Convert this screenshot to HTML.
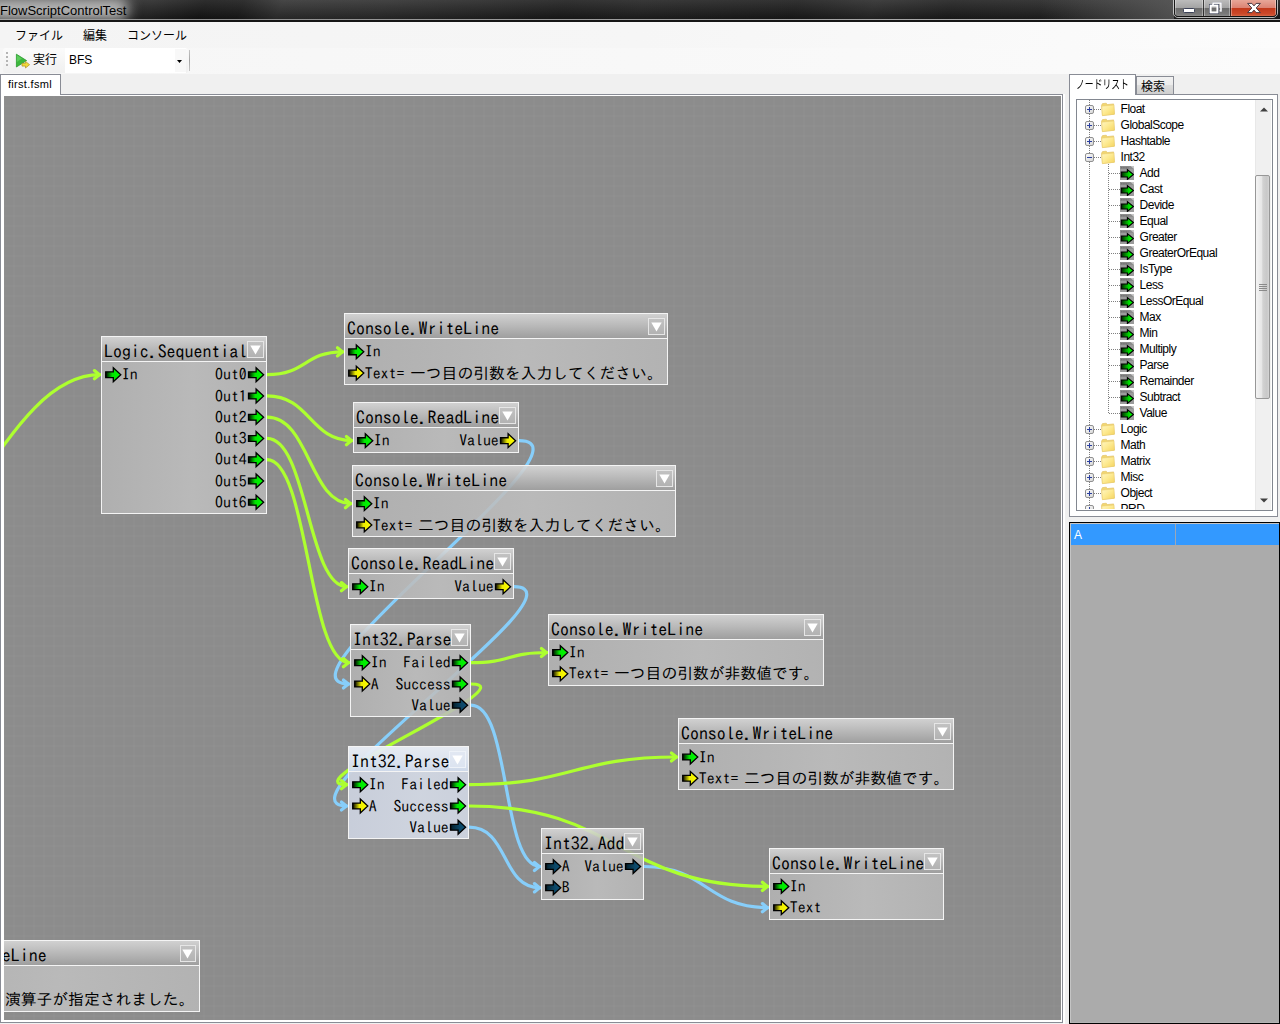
<!DOCTYPE html>
<html lang="ja">
<head>
<meta charset="utf-8">
<title>FlowScriptControlTest</title>
<style>
html,body{margin:0;padding:0;}
body{width:1280px;height:1024px;overflow:hidden;background:#f0f0f0;position:relative;font-family:"Liberation Sans","Noto Sans CJK JP",sans-serif;font-size:12px;color:#000;}
.abs{position:absolute;}
/* title bar */
#titlebar{left:0;top:0;width:1280px;height:20px;background:linear-gradient(115deg,#2c2c2c 0%,#262626 12%,#161616 16%,#1a1a1a 19%,#323232 22%,#2e2e2e 30%,#242424 38%,#1c1c1c 44%,#222 50%,#1b1b1b 62%,#2a2a2a 68%,#1e1e1e 74%,#262626 86%,#1c1c1c 100%);overflow:hidden;}
#titlebar .shade{left:0;top:0;width:1280px;height:20px;background:linear-gradient(180deg,rgba(255,255,255,.10),rgba(0,0,0,.25));}
#titleglow{left:-14px;top:-2px;width:142px;height:22px;background:#bababa;filter:blur(7px);border-radius:8px;}
#titletext{left:0;top:2.7px;font-size:13px;line-height:16px;color:#000;white-space:nowrap;}
#tbline1{left:0;top:19px;width:1280px;height:1px;background:linear-gradient(90deg,#a8a8a8,#8e8e8e 15%,#a0a0a0 60%,#b8b8b8 100%);}
#tbline2{left:0;top:20px;width:1280px;height:2px;background:#161616;}
.wb{top:0;height:20px;box-sizing:border-box;background:linear-gradient(180deg,#c2c2c2 0%,#a4a4a4 48%,#6c6c6c 52%,#7a7a7a 80%,#9a9a9a 100%);box-shadow:inset 0 0 0 1px rgba(255,255,255,.35);}
.wb.wc{background:linear-gradient(180deg,#eab0a2 0%,#dc8474 48%,#c23a1c 52%,#cc4a2a 80%,#de8060 100%);}
/* menu */
#menubar{left:0;top:22px;width:1280px;height:26px;background:linear-gradient(90deg,#f4f4f4,#f6f6f6 50%,#fcfcfc 100%);}
.mi{position:absolute;top:5.7px;font-size:12px;line-height:16px;white-space:nowrap;}
#toolbarbg{left:0;top:48px;width:1280px;height:26px;background:linear-gradient(90deg,#f6f6f6,#f8f8f8 50%,#fbfbfb 100%);}
#toolbar{left:3px;top:48px;width:185px;height:25px;background:linear-gradient(#fbfbfb,#f0f0f0);border-radius:3px;}
/* tab controls */
.tabpage{position:absolute;border:1px solid #898c95;background:#fff;box-sizing:border-box;}
.tab{position:absolute;box-sizing:border-box;border:1px solid #898c95;border-bottom:none;font-size:11px;white-space:nowrap;}
/* canvas */
#canvas{left:4px;top:96px;width:1057px;height:924px;overflow:hidden;background-color:#8c8c8c;
background-image:linear-gradient(90deg,rgba(255,255,255,.021) 0,rgba(255,255,255,.021) 1px,transparent 1px,transparent 9px,rgba(255,255,255,.021) 9px),linear-gradient(0deg,rgba(255,255,255,.021) 0,rgba(255,255,255,.021) 1px,transparent 1px,transparent 9px,rgba(255,255,255,.021) 9px);
background-size:10px 10px;background-position:0 0;}
.links{position:absolute;left:0;top:0;}
.links path{fill:none;stroke-width:3.2;stroke-linecap:round;stroke-linejoin:miter;}
.node{position:absolute;box-sizing:border-box;border:1px solid #f4f4f4;font-family:"IPAGothic","Liberation Mono",monospace;color:#000;overflow:hidden;}
.node .hd{position:relative;height:24px;background:linear-gradient(180deg,rgba(218,218,218,.88) 0%,rgba(193,193,193,.88) 45%,rgba(161,161,161,.88) 100%);border-bottom:1px solid #f4f4f4;}
.node .tt{position:absolute;left:2px;top:4px;font-size:17.9px;line-height:20px;white-space:nowrap;}
.node .dd{position:absolute;right:2.3px;top:4.4px;width:16.4px;height:17px;box-sizing:border-box;border:1.5px solid #e6e6e6;background:rgba(190,190,190,.5);}
.node .dd svg{position:absolute;left:1.3px;top:2.6px;}
.node .bd{position:absolute;left:0;right:0;top:25px;bottom:0;background:linear-gradient(90deg,rgba(180,180,180,.87) 0%,rgba(192,192,192,.87) 55%,rgba(184,184,184,.87) 100%);}
.node.sel .hd{background:linear-gradient(180deg,rgba(234,239,247,.95) 0%,rgba(226,233,244,.95) 50%,rgba(210,221,238,.95) 100%);}
.node.sel .bd{background:linear-gradient(90deg,rgba(203,209,222,.95),rgba(210,216,227,.95) 60%,rgba(206,212,224,.95));}
.node.sel .dd{background:rgba(225,232,243,.6);border-color:#eef2f8;}
.pas{position:absolute;left:0;top:0;overflow:hidden;}
.pas path{stroke:#000;stroke-width:1.3;stroke-linejoin:miter;}
.pl,.pr{position:absolute;font-size:15.8px;line-height:19px;white-space:nowrap;}
.jp{margin-left:-2.2px;}
/* tree */
#tree{left:1076px;top:99px;width:197px;height:412px;border:1px solid #828790;background:#fff;box-sizing:border-box;overflow:hidden;}
.tr{position:absolute;height:16px;font-size:12px;line-height:16px;white-space:nowrap;letter-spacing:-.52px;margin-left:-.4px;}
.dv{position:absolute;width:1px;background-image:linear-gradient(180deg,#808080 1px,transparent 1px);background-size:1px 2px;}
.dh{position:absolute;height:1px;background-image:linear-gradient(90deg,#808080 1px,transparent 1px);background-size:2px 1px;}
#tree .abs{position:absolute;}
#sb{position:absolute;left:178px;top:0;width:16px;height:410px;background:#f0f0f0;border-left:1px solid #e8e8e8;box-sizing:border-box;}
#thumb{position:absolute;left:-1px;top:74.5px;width:15px;height:224px;box-sizing:border-box;border:1px solid #979797;border-radius:2px;background:linear-gradient(90deg,#f4f4f4 0%,#e6e6e6 45%,#d2d2d2 52%,#c8c8c8 85%,#d6d6d6 100%);}
/* grid */
#grid{left:1069px;top:522px;width:211px;height:502px;background:#ababab;border:1px solid #000;box-sizing:border-box;}
</style>
</head>
<body>
<svg width="0" height="0" style="position:absolute">
<defs>
<linearGradient id="gg" x1="0" y1="0" x2="1" y2="0"><stop offset="0" stop-color="#000"/><stop offset=".08" stop-color="#002c00"/><stop offset=".44" stop-color="#00e400"/><stop offset="1" stop-color="#00ff00"/></linearGradient>
<linearGradient id="gy" x1="0" y1="0" x2="1" y2="0"><stop offset="0" stop-color="#000"/><stop offset=".08" stop-color="#2c2c00"/><stop offset=".44" stop-color="#ecec00"/><stop offset="1" stop-color="#ffff00"/></linearGradient>
<linearGradient id="gn" x1="0" y1="0" x2="1" y2="0"><stop offset="0" stop-color="#020c12"/><stop offset=".15" stop-color="#052838"/><stop offset=".62" stop-color="#0c4868"/><stop offset="1" stop-color="#0e5074"/></linearGradient>
<linearGradient id="exg" x1="0" y1="0" x2="1" y2="1"><stop offset="0" stop-color="#fff"/><stop offset="1" stop-color="#d4d4d4"/></linearGradient>
<linearGradient id="fog" x1="0" y1="0" x2="1" y2="1"><stop offset="0" stop-color="#fff6c4"/><stop offset=".5" stop-color="#fde98e"/><stop offset="1" stop-color="#f4d35e"/></linearGradient>
<linearGradient id="lfg" x1="0" y1="0" x2="1" y2="0"><stop offset="0" stop-color="#002000"/><stop offset=".65" stop-color="#00e000"/><stop offset="1" stop-color="#00ff00"/></linearGradient>


</defs>
</svg>

<!-- TITLE BAR -->
<div id="titlebar" class="abs"><div class="abs shade"></div><div id="titleglow" class="abs"></div><div class="abs" style="left:1040px;top:0;width:134px;height:20px;background:linear-gradient(90deg,rgba(90,90,90,0),rgba(96,96,96,.75))"></div><div id="titletext" class="abs">FlowScriptControlTest</div>
<div class="abs" style="left:1173px;top:-3px;width:105px;height:21px;border:1px solid rgba(235,235,235,.75);border-radius:0 0 5px 5px;box-sizing:border-box;"></div>
<div class="abs" style="left:1174px;top:-3px;width:103px;height:20px;border:1px solid rgba(20,20,20,.85);border-radius:0 0 4px 4px;box-sizing:border-box;overflow:hidden;">
<div class="abs wb" style="left:0;width:28px;"></div>
<div class="abs wb" style="left:28px;width:27px;border-left:1px solid rgba(30,30,30,.8);"></div>
<div class="abs wb wc" style="left:55px;width:46px;border-left:1px solid rgba(30,30,30,.8);"></div>
</div>
<svg class="abs" style="left:1174px;top:0" width="104" height="18" viewBox="0 0 104 18">
<rect x="9.5" y="8.5" width="11" height="4" rx=".8" fill="#fff" stroke="#3c4258" stroke-width="1"/>
<g fill="none" stroke="#3c4258" stroke-width="1"><path d="M38.5 5V2.5H47.5V11.5H45"/><rect x="35.5" y="4.5" width="9" height="9" /></g>
<path d="M39 5V3H47V11H45.5" fill="none" stroke="#fff" stroke-width="1.6"/>
<rect x="36.6" y="5.6" width="6.8" height="6.8" fill="none" stroke="#fff" stroke-width="2"/>
<path d="M73.6 3.4H77.9L80 5.9L82.1 3.4H86.4L82.2 8L86.4 12.6H82.1L80 10.1L77.9 12.6H73.6L77.8 8Z" fill="#fff" stroke="#4a3a44" stroke-width="1" stroke-linejoin="round"/>
</svg>
</div>
<div id="tbline1" class="abs"></div>
<div id="tbline2" class="abs"></div>

<!-- MENU -->
<div id="menubar" class="abs">
<span class="mi" style="left:15px">ファイル</span>
<span class="mi" style="left:83px">編集</span>
<span class="mi" style="left:127px">コンソール</span>
</div>
<div id="toolbarbg" class="abs"></div>
<div id="toolbar" class="abs">
<div class="abs" style="left:62px;top:0;width:121px;height:25px;background:#fff"></div>
<div class="abs" style="left:172px;top:1px;width:11px;height:23px;background:#f8f8f8"></div>
<div class="abs" style="left:3px;top:4px;width:2px;height:15px;background-image:linear-gradient(180deg,#b4b4b4 2px,transparent 2px);background-size:2px 4px"></div>
<svg class="abs" style="left:11px;top:5px" width="18" height="16" viewBox="0 0 18 16"><path d="M2.4 1.2L12.6 7.6L2.4 14Z" fill="#3cb83c" stroke="#2a9a2e" stroke-width=".8" stroke-linejoin="round"/><path d="M2.8 2.2L8 5.4L2.8 9Z" fill="#6fd86f" opacity=".6"/><path d="M8 10.3H11.5V8.4L15.6 11.7L11.5 15V13.1H8Z" fill="#f2d93a" stroke="#b09220" stroke-width=".7"/></svg>
<span class="abs" style="left:30px;top:4px;font-size:12px;line-height:16px;white-space:nowrap">実行</span>
<span class="abs" style="left:66px;top:4px;font-size:12px;line-height:16px;white-space:nowrap">BFS</span>
<svg class="abs" style="left:174px;top:11.5px" width="5" height="3" viewBox="0 0 5 3"><path d="M0 0H5L2.5 3Z" fill="#000"/></svg>
<div class="abs" style="left:186px;top:2px;width:1px;height:21px;background:linear-gradient(#c4c4c4,#a4a4a4 50%,#c4c4c4)"></div>
</div>

<!-- LEFT TAB CONTROL -->
<div class="tabpage" style="left:0;top:94px;width:1063px;height:929px;"></div>
<div class="tab" style="left:0;top:74px;width:61px;height:21px;background:#fff;"><span style="position:absolute;left:7px;top:3px;line-height:13px;letter-spacing:.3px">first.fsml</span></div>
<div class="abs" style="left:1063px;top:94px;width:2px;height:930px;background:#fff"></div>

<div id="canvas" class="abs">
<svg class="links" width="1058" height="923" viewBox="4 96 1058 923"><path d="M519.0 440.6C605.0 440.6 264.0 684.0 349.0 684.0" stroke="#87cefa"/><path d="M343.4 679.9L348.4 684.0L343.4 688.1" stroke="#87cefa"/><path d="M514.0 586.7C594.0 586.7 268.0 806.0 347.0 806.0" stroke="#87cefa"/><path d="M341.4 801.9L346.4 806.0L341.4 810.1" stroke="#87cefa"/><path d="M471.0 705.2C511.0 705.2 501.0 866.5 540.0 866.5" stroke="#87cefa"/><path d="M534.4 862.4L539.4 866.5L534.4 870.6" stroke="#87cefa"/><path d="M469.0 827.2C509.0 827.2 501.0 887.8 540.0 887.8" stroke="#87cefa"/><path d="M534.4 883.6L539.4 887.8L534.4 891.9" stroke="#87cefa"/><path d="M644.0 866.5C706.5 866.5 706.5 907.7 768.0 907.7" stroke="#87cefa"/><path d="M762.4 903.6L767.4 907.7L762.4 911.8" stroke="#87cefa"/><path d="M-200.0 625.0C-50.0 625.0 -7.0 374.7 100.0 374.7" stroke="#adff2f"/><path d="M94.4 370.6L99.4 374.7L94.4 378.8" stroke="#adff2f"/><path d="M267.0 374.7C307.0 374.7 304.0 351.8 343.0 351.8" stroke="#adff2f"/><path d="M337.4 347.7L342.4 351.8L337.4 355.9" stroke="#adff2f"/><path d="M267.0 395.9C310.0 395.9 310.0 440.6 352.0 440.6" stroke="#adff2f"/><path d="M346.4 436.5L351.4 440.6L346.4 444.7" stroke="#adff2f"/><path d="M267.0 417.2C309.5 417.2 309.5 503.6 351.0 503.6" stroke="#adff2f"/><path d="M345.4 499.5L350.4 503.6L345.4 507.7" stroke="#adff2f"/><path d="M267.0 438.4C307.5 438.4 307.5 586.7 347.0 586.7" stroke="#adff2f"/><path d="M341.4 582.6L346.4 586.7L341.4 590.8" stroke="#adff2f"/><path d="M267.0 459.7C308.5 459.7 308.5 662.7 349.0 662.7" stroke="#adff2f"/><path d="M343.4 658.6L348.4 662.7L343.4 666.8" stroke="#adff2f"/><path d="M471.0 662.7C511.0 662.7 508.0 652.5 547.0 652.5" stroke="#adff2f"/><path d="M541.4 648.4L546.4 652.5L541.4 656.6" stroke="#adff2f"/><path d="M471.0 684.0C531.0 684.0 288.0 784.7 347.0 784.7" stroke="#adff2f"/><path d="M341.4 780.6L346.4 784.7L341.4 788.8" stroke="#adff2f"/><path d="M469.0 784.7C573.5 784.7 573.5 757.0 677.0 757.0" stroke="#adff2f"/><path d="M671.4 752.9L676.4 757.0L671.4 761.1" stroke="#adff2f"/><path d="M469.0 806.0C619.0 806.0 619.0 886.4 768.0 886.4" stroke="#adff2f"/><path d="M762.4 882.3L767.4 886.4L762.4 890.5" stroke="#adff2f"/></svg>
<div class="node" style="left:97.00px;top:240.00px;width:166.00px;height:178.00px"><div class="hd"><span class="tt">Logic.Sequential</span><span class="dd"><svg width="11" height="10" viewBox="0 0 11 10"><path d="M0.3 0.4H10.7L5.5 9.6Z" fill="#fff"/></svg></span></div><div class="bd"><span class="pl" style="left:19.8px;top:3.35px">In</span><span class="pr" style="right:19.3px;top:3.35px">Out0</span><span class="pr" style="right:19.3px;top:24.60px">Out1</span><span class="pr" style="right:19.3px;top:45.85px">Out2</span><span class="pr" style="right:19.3px;top:67.10px">Out3</span><span class="pr" style="right:19.3px;top:88.35px">Out4</span><span class="pr" style="right:19.3px;top:109.60px">Out5</span><span class="pr" style="right:19.3px;top:130.85px">Out6</span><svg class="pas" width="166" height="151" viewBox="0 0 166 151"><path transform="translate(3.00 4.75)" d="M0.7 5.1H8.3V1.1L15.8 8L8.3 14.9V10.9H0.7Z" fill="url(#gg)"/><path transform="translate(145.80 4.75)" d="M0.7 5.1H8.3V1.1L15.8 8L8.3 14.9V10.9H0.7Z" fill="url(#gg)"/><path transform="translate(145.80 26.00)" d="M0.7 5.1H8.3V1.1L15.8 8L8.3 14.9V10.9H0.7Z" fill="url(#gg)"/><path transform="translate(145.80 47.25)" d="M0.7 5.1H8.3V1.1L15.8 8L8.3 14.9V10.9H0.7Z" fill="url(#gg)"/><path transform="translate(145.80 68.50)" d="M0.7 5.1H8.3V1.1L15.8 8L8.3 14.9V10.9H0.7Z" fill="url(#gg)"/><path transform="translate(145.80 89.75)" d="M0.7 5.1H8.3V1.1L15.8 8L8.3 14.9V10.9H0.7Z" fill="url(#gg)"/><path transform="translate(145.80 111.00)" d="M0.7 5.1H8.3V1.1L15.8 8L8.3 14.9V10.9H0.7Z" fill="url(#gg)"/><path transform="translate(145.80 132.25)" d="M0.7 5.1H8.3V1.1L15.8 8L8.3 14.9V10.9H0.7Z" fill="url(#gg)"/></svg></div></div>
<div class="node" style="left:340.00px;top:217.00px;width:324.00px;height:72.00px"><div class="hd"><span class="tt">Console.WriteLine</span><span class="dd"><svg width="11" height="10" viewBox="0 0 11 10"><path d="M0.3 0.4H10.7L5.5 9.6Z" fill="#fff"/></svg></span></div><div class="bd"><span class="pl" style="left:19.8px;top:3.45px">In</span><span class="pl" style="left:19.8px;top:24.70px">Text= <span class="jp">一つ目の引数を入力してください。</span></span><svg class="pas" width="324" height="45" viewBox="0 0 324 45"><path transform="translate(3.00 4.85)" d="M0.7 5.1H8.3V1.1L15.8 8L8.3 14.9V10.9H0.7Z" fill="url(#gg)"/><path transform="translate(3.00 26.10)" d="M0.7 5.1H8.3V1.1L15.8 8L8.3 14.9V10.9H0.7Z" fill="url(#gy)"/></svg></div></div>
<div class="node" style="left:349.00px;top:306.00px;width:166.00px;height:51.00px"><div class="hd"><span class="tt">Console.ReadLine</span><span class="dd"><svg width="11" height="10" viewBox="0 0 11 10"><path d="M0.3 0.4H10.7L5.5 9.6Z" fill="#fff"/></svg></span></div><div class="bd"><span class="pl" style="left:19.8px;top:3.25px">In</span><span class="pr" style="right:19.3px;top:3.25px">Value</span><svg class="pas" width="166" height="24" viewBox="0 0 166 24"><path transform="translate(3.00 4.65)" d="M0.7 5.1H8.3V1.1L15.8 8L8.3 14.9V10.9H0.7Z" fill="url(#gg)"/><path transform="translate(145.80 4.65)" d="M0.7 5.1H8.3V1.1L15.8 8L8.3 14.9V10.9H0.7Z" fill="url(#gy)"/></svg></div></div>
<div class="node" style="left:348.00px;top:369.00px;width:324.00px;height:72.00px"><div class="hd"><span class="tt">Console.WriteLine</span><span class="dd"><svg width="11" height="10" viewBox="0 0 11 10"><path d="M0.3 0.4H10.7L5.5 9.6Z" fill="#fff"/></svg></span></div><div class="bd"><span class="pl" style="left:19.8px;top:3.25px">In</span><span class="pl" style="left:19.8px;top:24.50px">Text= <span class="jp">二つ目の引数を入力してください。</span></span><svg class="pas" width="324" height="45" viewBox="0 0 324 45"><path transform="translate(3.00 4.65)" d="M0.7 5.1H8.3V1.1L15.8 8L8.3 14.9V10.9H0.7Z" fill="url(#gg)"/><path transform="translate(3.00 25.90)" d="M0.7 5.1H8.3V1.1L15.8 8L8.3 14.9V10.9H0.7Z" fill="url(#gy)"/></svg></div></div>
<div class="node" style="left:344.00px;top:452.00px;width:166.00px;height:51.00px"><div class="hd"><span class="tt">Console.ReadLine</span><span class="dd"><svg width="11" height="10" viewBox="0 0 11 10"><path d="M0.3 0.4H10.7L5.5 9.6Z" fill="#fff"/></svg></span></div><div class="bd"><span class="pl" style="left:19.8px;top:3.35px">In</span><span class="pr" style="right:19.3px;top:3.35px">Value</span><svg class="pas" width="166" height="24" viewBox="0 0 166 24"><path transform="translate(3.00 4.75)" d="M0.7 5.1H8.3V1.1L15.8 8L8.3 14.9V10.9H0.7Z" fill="url(#gg)"/><path transform="translate(145.80 4.75)" d="M0.7 5.1H8.3V1.1L15.8 8L8.3 14.9V10.9H0.7Z" fill="url(#gy)"/></svg></div></div>
<div class="node" style="left:346.00px;top:528.00px;width:121.00px;height:93.00px"><div class="hd"><span class="tt">Int32.Parse</span><span class="dd"><svg width="11" height="10" viewBox="0 0 11 10"><path d="M0.3 0.4H10.7L5.5 9.6Z" fill="#fff"/></svg></span></div><div class="bd"><span class="pl" style="left:19.8px;top:3.35px">In</span><span class="pl" style="left:19.8px;top:24.60px">A</span><span class="pr" style="right:19.3px;top:3.35px">Failed</span><span class="pr" style="right:19.3px;top:24.60px">Success</span><span class="pr" style="right:19.3px;top:45.85px">Value</span><svg class="pas" width="121" height="66" viewBox="0 0 121 66"><path transform="translate(3.00 4.75)" d="M0.7 5.1H8.3V1.1L15.8 8L8.3 14.9V10.9H0.7Z" fill="url(#gg)"/><path transform="translate(3.00 26.00)" d="M0.7 5.1H8.3V1.1L15.8 8L8.3 14.9V10.9H0.7Z" fill="url(#gy)"/><path transform="translate(100.80 4.75)" d="M0.7 5.1H8.3V1.1L15.8 8L8.3 14.9V10.9H0.7Z" fill="url(#gg)"/><path transform="translate(100.80 26.00)" d="M0.7 5.1H8.3V1.1L15.8 8L8.3 14.9V10.9H0.7Z" fill="url(#gg)"/><path transform="translate(100.80 47.25)" d="M0.7 5.1H8.3V1.1L15.8 8L8.3 14.9V10.9H0.7Z" fill="url(#gn)"/></svg></div></div>
<div class="node" style="left:544.00px;top:518.00px;width:276.00px;height:72.00px"><div class="hd"><span class="tt">Console.WriteLine</span><span class="dd"><svg width="11" height="10" viewBox="0 0 11 10"><path d="M0.3 0.4H10.7L5.5 9.6Z" fill="#fff"/></svg></span></div><div class="bd"><span class="pl" style="left:19.8px;top:3.15px">In</span><span class="pl" style="left:19.8px;top:24.40px">Text= <span class="jp">一つ目の引数が非数値です。</span></span><svg class="pas" width="276" height="45" viewBox="0 0 276 45"><path transform="translate(3.00 4.55)" d="M0.7 5.1H8.3V1.1L15.8 8L8.3 14.9V10.9H0.7Z" fill="url(#gg)"/><path transform="translate(3.00 25.80)" d="M0.7 5.1H8.3V1.1L15.8 8L8.3 14.9V10.9H0.7Z" fill="url(#gy)"/></svg></div></div>
<div class="node sel" style="left:344.00px;top:650.00px;width:121.00px;height:93.00px"><div class="hd"><span class="tt">Int32.Parse</span><span class="dd"><svg width="11" height="10" viewBox="0 0 11 10"><path d="M0.3 0.4H10.7L5.5 9.6Z" fill="#fff"/></svg></span></div><div class="bd"><span class="pl" style="left:19.8px;top:3.35px">In</span><span class="pl" style="left:19.8px;top:24.60px">A</span><span class="pr" style="right:19.3px;top:3.35px">Failed</span><span class="pr" style="right:19.3px;top:24.60px">Success</span><span class="pr" style="right:19.3px;top:45.85px">Value</span><svg class="pas" width="121" height="66" viewBox="0 0 121 66"><path transform="translate(3.00 4.75)" d="M0.7 5.1H8.3V1.1L15.8 8L8.3 14.9V10.9H0.7Z" fill="url(#gg)"/><path transform="translate(3.00 26.00)" d="M0.7 5.1H8.3V1.1L15.8 8L8.3 14.9V10.9H0.7Z" fill="url(#gy)"/><path transform="translate(100.80 4.75)" d="M0.7 5.1H8.3V1.1L15.8 8L8.3 14.9V10.9H0.7Z" fill="url(#gg)"/><path transform="translate(100.80 26.00)" d="M0.7 5.1H8.3V1.1L15.8 8L8.3 14.9V10.9H0.7Z" fill="url(#gg)"/><path transform="translate(100.80 47.25)" d="M0.7 5.1H8.3V1.1L15.8 8L8.3 14.9V10.9H0.7Z" fill="url(#gn)"/></svg></div></div>
<div class="node" style="left:674.00px;top:622.00px;width:276.00px;height:72.00px"><div class="hd"><span class="tt">Console.WriteLine</span><span class="dd"><svg width="11" height="10" viewBox="0 0 11 10"><path d="M0.3 0.4H10.7L5.5 9.6Z" fill="#fff"/></svg></span></div><div class="bd"><span class="pl" style="left:19.8px;top:3.65px">In</span><span class="pl" style="left:19.8px;top:24.90px">Text= <span class="jp">二つ目の引数が非数値です。</span></span><svg class="pas" width="276" height="45" viewBox="0 0 276 45"><path transform="translate(3.00 5.05)" d="M0.7 5.1H8.3V1.1L15.8 8L8.3 14.9V10.9H0.7Z" fill="url(#gg)"/><path transform="translate(3.00 26.30)" d="M0.7 5.1H8.3V1.1L15.8 8L8.3 14.9V10.9H0.7Z" fill="url(#gy)"/></svg></div></div>
<div class="node" style="left:537.00px;top:732.00px;width:103.00px;height:72.00px"><div class="hd"><span class="tt">Int32.Add</span><span class="dd"><svg width="11" height="10" viewBox="0 0 11 10"><path d="M0.3 0.4H10.7L5.5 9.6Z" fill="#fff"/></svg></span></div><div class="bd"><span class="pl" style="left:19.8px;top:3.15px">A</span><span class="pl" style="left:19.8px;top:24.40px">B</span><span class="pr" style="right:19.3px;top:3.15px">Value</span><svg class="pas" width="103" height="45" viewBox="0 0 103 45"><path transform="translate(3.00 4.55)" d="M0.7 5.1H8.3V1.1L15.8 8L8.3 14.9V10.9H0.7Z" fill="url(#gn)"/><path transform="translate(3.00 25.80)" d="M0.7 5.1H8.3V1.1L15.8 8L8.3 14.9V10.9H0.7Z" fill="url(#gn)"/><path transform="translate(82.80 4.55)" d="M0.7 5.1H8.3V1.1L15.8 8L8.3 14.9V10.9H0.7Z" fill="url(#gn)"/></svg></div></div>
<div class="node" style="left:765.00px;top:752.00px;width:175.00px;height:72.00px"><div class="hd"><span class="tt">Console.WriteLine</span><span class="dd"><svg width="11" height="10" viewBox="0 0 11 10"><path d="M0.3 0.4H10.7L5.5 9.6Z" fill="#fff"/></svg></span></div><div class="bd"><span class="pl" style="left:19.8px;top:3.05px">In</span><span class="pl" style="left:19.8px;top:24.30px">Text</span><svg class="pas" width="175" height="45" viewBox="0 0 175 45"><path transform="translate(3.00 4.45)" d="M0.7 5.1H8.3V1.1L15.8 8L8.3 14.9V10.9H0.7Z" fill="url(#gg)"/><path transform="translate(3.00 25.70)" d="M0.7 5.1H8.3V1.1L15.8 8L8.3 14.9V10.9H0.7Z" fill="url(#gy)"/></svg></div></div>
<div class="node" style="left:-112.50px;top:844.00px;width:308.00px;height:72.00px"><div class="hd"><span class="tt">Console.WriteLine</span><span class="dd"><svg width="11" height="10" viewBox="0 0 11 10"><path d="M0.3 0.4H10.7L5.5 9.6Z" fill="#fff"/></svg></span></div><div class="bd"><span class="pl" style="left:19.8px;top:3.15px">In</span><span class="pl" style="left:19.8px;top:24.40px">Text= <span class="jp">不正な演算子が指定されました。</span></span><svg class="pas" width="308" height="45" viewBox="0 0 308 45"><path transform="translate(3.00 4.55)" d="M0.7 5.1H8.3V1.1L15.8 8L8.3 14.9V10.9H0.7Z" fill="url(#gg)"/><path transform="translate(3.00 25.80)" d="M0.7 5.1H8.3V1.1L15.8 8L8.3 14.9V10.9H0.7Z" fill="url(#gy)"/></svg></div></div>
</div>

<!-- RIGHT TAB CONTROL -->
<div class="tabpage" style="left:1069px;top:94px;width:209px;height:423px;"></div>
<div class="tab" style="left:1136px;top:76px;width:38px;height:18px;background:linear-gradient(#f2f2f2 0%,#ebebeb 50%,#dddddd 50%,#cfcfcf 100%);"><span style="position:absolute;left:4px;top:3px;font-size:12px;line-height:14px;">検索</span></div>
<div class="tab" style="left:1069px;top:74px;width:67px;height:21px;background:#fff;"><span style="position:absolute;left:6px;top:2.7px;font-size:12px;line-height:14px;display:inline-block;transform:scaleX(.735);transform-origin:0 50%">ノードリスト</span></div>
<div id="tree" class="abs">
<div class="dv" style="left:12px;top:0;height:417px"></div>
<div class="dv" style="left:31px;top:64px;height:249px"></div>
<div class="dh" style="left:17px;top:9px;width:7px"></div>
<svg class="abs" style="left:8px;top:5px" width="9" height="9" viewBox="0 0 9 9"><rect x=".5" y=".5" width="8" height="8" rx="1.5" fill="url(#exg)" stroke="#919191"/><path d="M2 4.5H7" stroke="#2b3f9e" stroke-width="1"/><path d="M4.5 2V7" stroke="#2b3f9e" stroke-width="1"/></svg>
<svg class="abs" style="left:23px;top:2px" width="16" height="15" viewBox="0 0 16 15"><path d="M1.5 3.2L2.5 1.6L6.2 1.2L7.3 2.6L13.6 1.9L14.4 12.2L2.4 13.6Z" fill="#f1d672" stroke="#e0c060" stroke-width=".6"/><path d="M1.8 4.2L13.9 3L14.4 12.2L2.4 13.6Z" fill="url(#fog)" stroke="#e9cd70" stroke-width=".5"/></svg>
<span class="tr" style="left:44px;top:1px">Float</span>
<div class="dh" style="left:17px;top:25px;width:7px"></div>
<svg class="abs" style="left:8px;top:21px" width="9" height="9" viewBox="0 0 9 9"><rect x=".5" y=".5" width="8" height="8" rx="1.5" fill="url(#exg)" stroke="#919191"/><path d="M2 4.5H7" stroke="#2b3f9e" stroke-width="1"/><path d="M4.5 2V7" stroke="#2b3f9e" stroke-width="1"/></svg>
<svg class="abs" style="left:23px;top:18px" width="16" height="15" viewBox="0 0 16 15"><path d="M1.5 3.2L2.5 1.6L6.2 1.2L7.3 2.6L13.6 1.9L14.4 12.2L2.4 13.6Z" fill="#f1d672" stroke="#e0c060" stroke-width=".6"/><path d="M1.8 4.2L13.9 3L14.4 12.2L2.4 13.6Z" fill="url(#fog)" stroke="#e9cd70" stroke-width=".5"/></svg>
<span class="tr" style="left:44px;top:17px">GlobalScope</span>
<div class="dh" style="left:17px;top:41px;width:7px"></div>
<svg class="abs" style="left:8px;top:37px" width="9" height="9" viewBox="0 0 9 9"><rect x=".5" y=".5" width="8" height="8" rx="1.5" fill="url(#exg)" stroke="#919191"/><path d="M2 4.5H7" stroke="#2b3f9e" stroke-width="1"/><path d="M4.5 2V7" stroke="#2b3f9e" stroke-width="1"/></svg>
<svg class="abs" style="left:23px;top:34px" width="16" height="15" viewBox="0 0 16 15"><path d="M1.5 3.2L2.5 1.6L6.2 1.2L7.3 2.6L13.6 1.9L14.4 12.2L2.4 13.6Z" fill="#f1d672" stroke="#e0c060" stroke-width=".6"/><path d="M1.8 4.2L13.9 3L14.4 12.2L2.4 13.6Z" fill="url(#fog)" stroke="#e9cd70" stroke-width=".5"/></svg>
<span class="tr" style="left:44px;top:33px">Hashtable</span>
<div class="dh" style="left:17px;top:57px;width:7px"></div>
<svg class="abs" style="left:8px;top:53px" width="9" height="9" viewBox="0 0 9 9"><rect x=".5" y=".5" width="8" height="8" rx="1.5" fill="url(#exg)" stroke="#919191"/><path d="M2 4.5H7" stroke="#2b3f9e" stroke-width="1"/></svg>
<svg class="abs" style="left:23px;top:50px" width="16" height="15" viewBox="0 0 16 15"><path d="M1.5 3.2L2.5 1.6L6.2 1.2L7.3 2.6L13.6 1.9L14.4 12.2L2.4 13.6Z" fill="#f1d672" stroke="#e0c060" stroke-width=".6"/><path d="M1.8 4.2L13.9 3L14.4 12.2L2.4 13.6Z" fill="url(#fog)" stroke="#e9cd70" stroke-width=".5"/></svg>
<span class="tr" style="left:44px;top:49px">Int32</span>
<div class="dh" style="left:32px;top:73px;width:11px"></div>
<svg class="abs" style="left:43px;top:66px" width="14" height="14" viewBox="0 0 14 14"><rect width="14" height="14" fill="#9c9c9c"/><rect width="14" height="3" fill="#8c8c8c"/><path d="M1 1.8H8.5" stroke="#666" stroke-width=".9" stroke-dasharray="1.5 .7"/><path d="M10.5 0H14V3Z" fill="#c8c8c8"/><path d="M1.3 6H7.4V3.6L13.4 8.5L7.4 13.4V11H1.3Z" fill="url(#lfg)" stroke="#000" stroke-width="1.15"/></svg>
<span class="tr" style="left:63px;top:65px">Add</span>
<div class="dh" style="left:32px;top:89px;width:11px"></div>
<svg class="abs" style="left:43px;top:82px" width="14" height="14" viewBox="0 0 14 14"><rect width="14" height="14" fill="#9c9c9c"/><rect width="14" height="3" fill="#8c8c8c"/><path d="M1 1.8H8.5" stroke="#666" stroke-width=".9" stroke-dasharray="1.5 .7"/><path d="M10.5 0H14V3Z" fill="#c8c8c8"/><path d="M1.3 6H7.4V3.6L13.4 8.5L7.4 13.4V11H1.3Z" fill="url(#lfg)" stroke="#000" stroke-width="1.15"/></svg>
<span class="tr" style="left:63px;top:81px">Cast</span>
<div class="dh" style="left:32px;top:105px;width:11px"></div>
<svg class="abs" style="left:43px;top:98px" width="14" height="14" viewBox="0 0 14 14"><rect width="14" height="14" fill="#9c9c9c"/><rect width="14" height="3" fill="#8c8c8c"/><path d="M1 1.8H8.5" stroke="#666" stroke-width=".9" stroke-dasharray="1.5 .7"/><path d="M10.5 0H14V3Z" fill="#c8c8c8"/><path d="M1.3 6H7.4V3.6L13.4 8.5L7.4 13.4V11H1.3Z" fill="url(#lfg)" stroke="#000" stroke-width="1.15"/></svg>
<span class="tr" style="left:63px;top:97px">Devide</span>
<div class="dh" style="left:32px;top:121px;width:11px"></div>
<svg class="abs" style="left:43px;top:114px" width="14" height="14" viewBox="0 0 14 14"><rect width="14" height="14" fill="#9c9c9c"/><rect width="14" height="3" fill="#8c8c8c"/><path d="M1 1.8H8.5" stroke="#666" stroke-width=".9" stroke-dasharray="1.5 .7"/><path d="M10.5 0H14V3Z" fill="#c8c8c8"/><path d="M1.3 6H7.4V3.6L13.4 8.5L7.4 13.4V11H1.3Z" fill="url(#lfg)" stroke="#000" stroke-width="1.15"/></svg>
<span class="tr" style="left:63px;top:113px">Equal</span>
<div class="dh" style="left:32px;top:137px;width:11px"></div>
<svg class="abs" style="left:43px;top:130px" width="14" height="14" viewBox="0 0 14 14"><rect width="14" height="14" fill="#9c9c9c"/><rect width="14" height="3" fill="#8c8c8c"/><path d="M1 1.8H8.5" stroke="#666" stroke-width=".9" stroke-dasharray="1.5 .7"/><path d="M10.5 0H14V3Z" fill="#c8c8c8"/><path d="M1.3 6H7.4V3.6L13.4 8.5L7.4 13.4V11H1.3Z" fill="url(#lfg)" stroke="#000" stroke-width="1.15"/></svg>
<span class="tr" style="left:63px;top:129px">Greater</span>
<div class="dh" style="left:32px;top:153px;width:11px"></div>
<svg class="abs" style="left:43px;top:146px" width="14" height="14" viewBox="0 0 14 14"><rect width="14" height="14" fill="#9c9c9c"/><rect width="14" height="3" fill="#8c8c8c"/><path d="M1 1.8H8.5" stroke="#666" stroke-width=".9" stroke-dasharray="1.5 .7"/><path d="M10.5 0H14V3Z" fill="#c8c8c8"/><path d="M1.3 6H7.4V3.6L13.4 8.5L7.4 13.4V11H1.3Z" fill="url(#lfg)" stroke="#000" stroke-width="1.15"/></svg>
<span class="tr" style="left:63px;top:145px">GreaterOrEqual</span>
<div class="dh" style="left:32px;top:169px;width:11px"></div>
<svg class="abs" style="left:43px;top:162px" width="14" height="14" viewBox="0 0 14 14"><rect width="14" height="14" fill="#9c9c9c"/><rect width="14" height="3" fill="#8c8c8c"/><path d="M1 1.8H8.5" stroke="#666" stroke-width=".9" stroke-dasharray="1.5 .7"/><path d="M10.5 0H14V3Z" fill="#c8c8c8"/><path d="M1.3 6H7.4V3.6L13.4 8.5L7.4 13.4V11H1.3Z" fill="url(#lfg)" stroke="#000" stroke-width="1.15"/></svg>
<span class="tr" style="left:63px;top:161px">IsType</span>
<div class="dh" style="left:32px;top:185px;width:11px"></div>
<svg class="abs" style="left:43px;top:178px" width="14" height="14" viewBox="0 0 14 14"><rect width="14" height="14" fill="#9c9c9c"/><rect width="14" height="3" fill="#8c8c8c"/><path d="M1 1.8H8.5" stroke="#666" stroke-width=".9" stroke-dasharray="1.5 .7"/><path d="M10.5 0H14V3Z" fill="#c8c8c8"/><path d="M1.3 6H7.4V3.6L13.4 8.5L7.4 13.4V11H1.3Z" fill="url(#lfg)" stroke="#000" stroke-width="1.15"/></svg>
<span class="tr" style="left:63px;top:177px">Less</span>
<div class="dh" style="left:32px;top:201px;width:11px"></div>
<svg class="abs" style="left:43px;top:194px" width="14" height="14" viewBox="0 0 14 14"><rect width="14" height="14" fill="#9c9c9c"/><rect width="14" height="3" fill="#8c8c8c"/><path d="M1 1.8H8.5" stroke="#666" stroke-width=".9" stroke-dasharray="1.5 .7"/><path d="M10.5 0H14V3Z" fill="#c8c8c8"/><path d="M1.3 6H7.4V3.6L13.4 8.5L7.4 13.4V11H1.3Z" fill="url(#lfg)" stroke="#000" stroke-width="1.15"/></svg>
<span class="tr" style="left:63px;top:193px">LessOrEqual</span>
<div class="dh" style="left:32px;top:217px;width:11px"></div>
<svg class="abs" style="left:43px;top:210px" width="14" height="14" viewBox="0 0 14 14"><rect width="14" height="14" fill="#9c9c9c"/><rect width="14" height="3" fill="#8c8c8c"/><path d="M1 1.8H8.5" stroke="#666" stroke-width=".9" stroke-dasharray="1.5 .7"/><path d="M10.5 0H14V3Z" fill="#c8c8c8"/><path d="M1.3 6H7.4V3.6L13.4 8.5L7.4 13.4V11H1.3Z" fill="url(#lfg)" stroke="#000" stroke-width="1.15"/></svg>
<span class="tr" style="left:63px;top:209px">Max</span>
<div class="dh" style="left:32px;top:233px;width:11px"></div>
<svg class="abs" style="left:43px;top:226px" width="14" height="14" viewBox="0 0 14 14"><rect width="14" height="14" fill="#9c9c9c"/><rect width="14" height="3" fill="#8c8c8c"/><path d="M1 1.8H8.5" stroke="#666" stroke-width=".9" stroke-dasharray="1.5 .7"/><path d="M10.5 0H14V3Z" fill="#c8c8c8"/><path d="M1.3 6H7.4V3.6L13.4 8.5L7.4 13.4V11H1.3Z" fill="url(#lfg)" stroke="#000" stroke-width="1.15"/></svg>
<span class="tr" style="left:63px;top:225px">Min</span>
<div class="dh" style="left:32px;top:249px;width:11px"></div>
<svg class="abs" style="left:43px;top:242px" width="14" height="14" viewBox="0 0 14 14"><rect width="14" height="14" fill="#9c9c9c"/><rect width="14" height="3" fill="#8c8c8c"/><path d="M1 1.8H8.5" stroke="#666" stroke-width=".9" stroke-dasharray="1.5 .7"/><path d="M10.5 0H14V3Z" fill="#c8c8c8"/><path d="M1.3 6H7.4V3.6L13.4 8.5L7.4 13.4V11H1.3Z" fill="url(#lfg)" stroke="#000" stroke-width="1.15"/></svg>
<span class="tr" style="left:63px;top:241px">Multiply</span>
<div class="dh" style="left:32px;top:265px;width:11px"></div>
<svg class="abs" style="left:43px;top:258px" width="14" height="14" viewBox="0 0 14 14"><rect width="14" height="14" fill="#9c9c9c"/><rect width="14" height="3" fill="#8c8c8c"/><path d="M1 1.8H8.5" stroke="#666" stroke-width=".9" stroke-dasharray="1.5 .7"/><path d="M10.5 0H14V3Z" fill="#c8c8c8"/><path d="M1.3 6H7.4V3.6L13.4 8.5L7.4 13.4V11H1.3Z" fill="url(#lfg)" stroke="#000" stroke-width="1.15"/></svg>
<span class="tr" style="left:63px;top:257px">Parse</span>
<div class="dh" style="left:32px;top:281px;width:11px"></div>
<svg class="abs" style="left:43px;top:274px" width="14" height="14" viewBox="0 0 14 14"><rect width="14" height="14" fill="#9c9c9c"/><rect width="14" height="3" fill="#8c8c8c"/><path d="M1 1.8H8.5" stroke="#666" stroke-width=".9" stroke-dasharray="1.5 .7"/><path d="M10.5 0H14V3Z" fill="#c8c8c8"/><path d="M1.3 6H7.4V3.6L13.4 8.5L7.4 13.4V11H1.3Z" fill="url(#lfg)" stroke="#000" stroke-width="1.15"/></svg>
<span class="tr" style="left:63px;top:273px">Remainder</span>
<div class="dh" style="left:32px;top:297px;width:11px"></div>
<svg class="abs" style="left:43px;top:290px" width="14" height="14" viewBox="0 0 14 14"><rect width="14" height="14" fill="#9c9c9c"/><rect width="14" height="3" fill="#8c8c8c"/><path d="M1 1.8H8.5" stroke="#666" stroke-width=".9" stroke-dasharray="1.5 .7"/><path d="M10.5 0H14V3Z" fill="#c8c8c8"/><path d="M1.3 6H7.4V3.6L13.4 8.5L7.4 13.4V11H1.3Z" fill="url(#lfg)" stroke="#000" stroke-width="1.15"/></svg>
<span class="tr" style="left:63px;top:289px">Subtract</span>
<div class="dh" style="left:32px;top:313px;width:11px"></div>
<svg class="abs" style="left:43px;top:306px" width="14" height="14" viewBox="0 0 14 14"><rect width="14" height="14" fill="#9c9c9c"/><rect width="14" height="3" fill="#8c8c8c"/><path d="M1 1.8H8.5" stroke="#666" stroke-width=".9" stroke-dasharray="1.5 .7"/><path d="M10.5 0H14V3Z" fill="#c8c8c8"/><path d="M1.3 6H7.4V3.6L13.4 8.5L7.4 13.4V11H1.3Z" fill="url(#lfg)" stroke="#000" stroke-width="1.15"/></svg>
<span class="tr" style="left:63px;top:305px">Value</span>
<div class="dh" style="left:17px;top:329px;width:7px"></div>
<svg class="abs" style="left:8px;top:325px" width="9" height="9" viewBox="0 0 9 9"><rect x=".5" y=".5" width="8" height="8" rx="1.5" fill="url(#exg)" stroke="#919191"/><path d="M2 4.5H7" stroke="#2b3f9e" stroke-width="1"/><path d="M4.5 2V7" stroke="#2b3f9e" stroke-width="1"/></svg>
<svg class="abs" style="left:23px;top:322px" width="16" height="15" viewBox="0 0 16 15"><path d="M1.5 3.2L2.5 1.6L6.2 1.2L7.3 2.6L13.6 1.9L14.4 12.2L2.4 13.6Z" fill="#f1d672" stroke="#e0c060" stroke-width=".6"/><path d="M1.8 4.2L13.9 3L14.4 12.2L2.4 13.6Z" fill="url(#fog)" stroke="#e9cd70" stroke-width=".5"/></svg>
<span class="tr" style="left:44px;top:321px">Logic</span>
<div class="dh" style="left:17px;top:345px;width:7px"></div>
<svg class="abs" style="left:8px;top:341px" width="9" height="9" viewBox="0 0 9 9"><rect x=".5" y=".5" width="8" height="8" rx="1.5" fill="url(#exg)" stroke="#919191"/><path d="M2 4.5H7" stroke="#2b3f9e" stroke-width="1"/><path d="M4.5 2V7" stroke="#2b3f9e" stroke-width="1"/></svg>
<svg class="abs" style="left:23px;top:338px" width="16" height="15" viewBox="0 0 16 15"><path d="M1.5 3.2L2.5 1.6L6.2 1.2L7.3 2.6L13.6 1.9L14.4 12.2L2.4 13.6Z" fill="#f1d672" stroke="#e0c060" stroke-width=".6"/><path d="M1.8 4.2L13.9 3L14.4 12.2L2.4 13.6Z" fill="url(#fog)" stroke="#e9cd70" stroke-width=".5"/></svg>
<span class="tr" style="left:44px;top:337px">Math</span>
<div class="dh" style="left:17px;top:361px;width:7px"></div>
<svg class="abs" style="left:8px;top:357px" width="9" height="9" viewBox="0 0 9 9"><rect x=".5" y=".5" width="8" height="8" rx="1.5" fill="url(#exg)" stroke="#919191"/><path d="M2 4.5H7" stroke="#2b3f9e" stroke-width="1"/><path d="M4.5 2V7" stroke="#2b3f9e" stroke-width="1"/></svg>
<svg class="abs" style="left:23px;top:354px" width="16" height="15" viewBox="0 0 16 15"><path d="M1.5 3.2L2.5 1.6L6.2 1.2L7.3 2.6L13.6 1.9L14.4 12.2L2.4 13.6Z" fill="#f1d672" stroke="#e0c060" stroke-width=".6"/><path d="M1.8 4.2L13.9 3L14.4 12.2L2.4 13.6Z" fill="url(#fog)" stroke="#e9cd70" stroke-width=".5"/></svg>
<span class="tr" style="left:44px;top:353px">Matrix</span>
<div class="dh" style="left:17px;top:377px;width:7px"></div>
<svg class="abs" style="left:8px;top:373px" width="9" height="9" viewBox="0 0 9 9"><rect x=".5" y=".5" width="8" height="8" rx="1.5" fill="url(#exg)" stroke="#919191"/><path d="M2 4.5H7" stroke="#2b3f9e" stroke-width="1"/><path d="M4.5 2V7" stroke="#2b3f9e" stroke-width="1"/></svg>
<svg class="abs" style="left:23px;top:370px" width="16" height="15" viewBox="0 0 16 15"><path d="M1.5 3.2L2.5 1.6L6.2 1.2L7.3 2.6L13.6 1.9L14.4 12.2L2.4 13.6Z" fill="#f1d672" stroke="#e0c060" stroke-width=".6"/><path d="M1.8 4.2L13.9 3L14.4 12.2L2.4 13.6Z" fill="url(#fog)" stroke="#e9cd70" stroke-width=".5"/></svg>
<span class="tr" style="left:44px;top:369px">Misc</span>
<div class="dh" style="left:17px;top:393px;width:7px"></div>
<svg class="abs" style="left:8px;top:389px" width="9" height="9" viewBox="0 0 9 9"><rect x=".5" y=".5" width="8" height="8" rx="1.5" fill="url(#exg)" stroke="#919191"/><path d="M2 4.5H7" stroke="#2b3f9e" stroke-width="1"/><path d="M4.5 2V7" stroke="#2b3f9e" stroke-width="1"/></svg>
<svg class="abs" style="left:23px;top:386px" width="16" height="15" viewBox="0 0 16 15"><path d="M1.5 3.2L2.5 1.6L6.2 1.2L7.3 2.6L13.6 1.9L14.4 12.2L2.4 13.6Z" fill="#f1d672" stroke="#e0c060" stroke-width=".6"/><path d="M1.8 4.2L13.9 3L14.4 12.2L2.4 13.6Z" fill="url(#fog)" stroke="#e9cd70" stroke-width=".5"/></svg>
<span class="tr" style="left:44px;top:385px">Object</span>
<div class="dh" style="left:17px;top:409px;width:7px"></div>
<svg class="abs" style="left:8px;top:405px" width="9" height="9" viewBox="0 0 9 9"><rect x=".5" y=".5" width="8" height="8" rx="1.5" fill="url(#exg)" stroke="#919191"/><path d="M2 4.5H7" stroke="#2b3f9e" stroke-width="1"/><path d="M4.5 2V7" stroke="#2b3f9e" stroke-width="1"/></svg>
<svg class="abs" style="left:23px;top:402px" width="16" height="15" viewBox="0 0 16 15"><path d="M1.5 3.2L2.5 1.6L6.2 1.2L7.3 2.6L13.6 1.9L14.4 12.2L2.4 13.6Z" fill="#f1d672" stroke="#e0c060" stroke-width=".6"/><path d="M1.8 4.2L13.9 3L14.4 12.2L2.4 13.6Z" fill="url(#fog)" stroke="#e9cd70" stroke-width=".5"/></svg>
<span class="tr" style="left:44px;top:401px">PRD</span>
<div style="position:absolute;left:0;bottom:0;width:178px;height:1px;background:#fff"></div>
<div id="sb"><svg style="position:absolute;left:3.5px;top:7px" width="8" height="5" viewBox="0 0 8 5"><path d="M0 4.5L4 .5L8 4.5Z" fill="#404040"/></svg>
<div id="thumb"><div style="position:absolute;left:3px;top:108px;width:8px;height:7px;background-image:linear-gradient(180deg,#8a8a8a 1px,transparent 1px);background-size:8px 2px"></div></div>
<svg style="position:absolute;left:3.5px;top:398px" width="8" height="5" viewBox="0 0 8 5"><path d="M0 .5L4 4.5L8 .5Z" fill="#404040"/></svg></div>
</div>

<!-- PROPERTY GRID -->
<div id="grid" class="abs">
<div class="abs" style="left:0;top:0;width:209px;height:500px;border:1px solid #c4c4c4;border-right:none;border-bottom-color:#b4b4b4;box-sizing:border-box"></div><div class="abs" style="left:1px;top:1px;width:208px;height:21px;background:#3399ff;"></div>
<div class="abs" style="left:105px;top:1px;width:1px;height:21px;background:#9aa7b8"></div>
<div class="abs" style="left:4px;top:5px;color:#fff;font-size:12px;line-height:14px;">A</div>
</div>
</body>
</html>
